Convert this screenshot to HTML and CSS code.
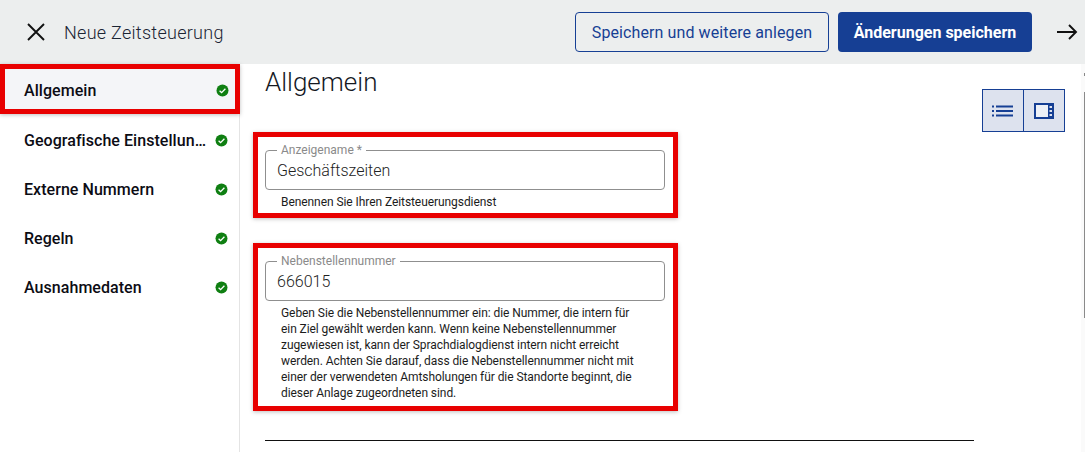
FILE: index.html
```html
<!DOCTYPE html>
<html lang="de">
<head>
    <meta charset="UTF-8">
    <title>Neue Zeitsteuerung</title>
    <link rel="stylesheet" href="styles.css">
</head>
<body>
    <header class="topbar">
        <svg class="icon-close" width="20" height="20" viewBox="0 0 20 20"><path d="M2 2 L18 18 M18 2 L2 18" fill="none" stroke="#111" stroke-width="1.9"/></svg>
        <span class="topbar-title">Neue Zeitsteuerung</span>
        <button class="btn btn-outline">Speichern und weitere anlegen</button>
        <button class="btn btn-primary">Änderungen speichern</button>
        <svg class="icon-next" width="22" height="16" viewBox="0 0 22 16"><path d="M1 8 H20 M13 1 L20 8 L13 15" fill="none" stroke="#111" stroke-width="1.9"/></svg>
    </header>
    <div class="layout">
        <nav class="sidebar">
            <a class="nav-item marked">
                <span class="nav-label">Allgemein</span>
                <svg class="check" width="13" height="13" viewBox="0 0 13 13"><circle cx="6.5" cy="6.5" r="6" fill="#0f7f12"/><path d="M3.6 6.7 L5.6 8.6 L9.4 4.8" fill="none" stroke="#fff" stroke-width="1.3"/></svg>
            </a>
            <a class="nav-item">
                <span class="nav-label">Geografische Einstellun…</span>
                <svg class="check" width="13" height="13" viewBox="0 0 13 13"><circle cx="6.5" cy="6.5" r="6" fill="#0f7f12"/><path d="M3.6 6.7 L5.6 8.6 L9.4 4.8" fill="none" stroke="#fff" stroke-width="1.3"/></svg>
            </a>
            <a class="nav-item">
                <span class="nav-label">Externe Nummern</span>
                <svg class="check" width="13" height="13" viewBox="0 0 13 13"><circle cx="6.5" cy="6.5" r="6" fill="#0f7f12"/><path d="M3.6 6.7 L5.6 8.6 L9.4 4.8" fill="none" stroke="#fff" stroke-width="1.3"/></svg>
            </a>
            <a class="nav-item">
                <span class="nav-label">Regeln</span>
                <svg class="check" width="13" height="13" viewBox="0 0 13 13"><circle cx="6.5" cy="6.5" r="6" fill="#0f7f12"/><path d="M3.6 6.7 L5.6 8.6 L9.4 4.8" fill="none" stroke="#fff" stroke-width="1.3"/></svg>
            </a>
            <a class="nav-item">
                <span class="nav-label">Ausnahmedaten</span>
                <svg class="check" width="13" height="13" viewBox="0 0 13 13"><circle cx="6.5" cy="6.5" r="6" fill="#0f7f12"/><path d="M3.6 6.7 L5.6 8.6 L9.4 4.8" fill="none" stroke="#fff" stroke-width="1.3"/></svg>
            </a>
        </nav>
        <main class="content">
            <div class="form-col">
                <h1>Allgemein</h1>
                <div class="field-box first">
                    <fieldset class="field">
                        <legend>Anzeigename *</legend>
                        <span class="field-value">Geschäftszeiten</span>
                    </fieldset>
                    <p class="hint">Benennen Sie Ihren Zeitsteuerungsdienst</p>
                </div>
                <div class="field-box">
                    <fieldset class="field">
                        <legend>Nebenstellennummer</legend>
                        <span class="field-value">666015</span>
                    </fieldset>
                    <p class="hint">Geben Sie die Nebenstellennummer ein: die Nummer, die intern für<br>ein Ziel gewählt werden kann. Wenn keine Nebenstellennummer<br>zugewiesen ist, kann der Sprachdialogdienst intern nicht erreicht<br>werden. Achten Sie darauf, dass die Nebenstellennummer nicht mit<br>einer der verwendeten Amtsholungen für die Standorte beginnt, die<br>dieser Anlage zugeordneten sind.</p>
                </div>
                <hr class="divider">
            </div>
            <div class="view-toggle">
                <button class="toggle-btn">
                    <svg width="22" height="14" viewBox="0 0 22 14"><path d="M0 2.5 H2 M0 7 H2 M0 11.5 H2 M4 2.5 H21 M4 7 H21 M4 11.5 H21" fill="none" stroke="#163f94" stroke-width="2"/></svg>
                </button>
                <button class="toggle-btn">
                    <svg width="20" height="16" viewBox="0 0 20 16"><rect x="1" y="1" width="18" height="14" fill="#eef1f7" stroke="#163f94" stroke-width="2"/><rect x="14" y="1" width="5" height="14" fill="#163f94"/><path d="M15.5 3 H18 V5 H15.5 Z M15.5 7 H18 V9 H15.5 Z M15.5 11 H18 V13 H15.5 Z" fill="#dde2ee"/></svg>
                </button>
            </div>
        </main>
        <div class="scrollbar">
            <div class="scroll-arrow"></div>
            <div class="scroll-thumb"></div>
        </div>
    </div>
</body>
</html>
```

FILE: styles.css
```css
* {
    margin: 0;
    padding: 0;
    box-sizing: border-box;
    font-family: Roboto, sans-serif;
}
html, body {
    height: 452px;
    overflow: hidden;
}
body {
    background: #fff;
    color: #111;
}

/* top bar */
.topbar {
    height: 64px;
    background: #eceeee;
    display: flex;
    align-items: center;
    padding: 0 7px 0 26px;
}
.icon-close {
    margin-right: 18px;
}
.topbar-title {
    font-size: 18px;
    font-weight: 300;
    letter-spacing: 0.28px;
    color: #1a2433;
    flex: 1;
}
.btn {
    height: 40px;
    border-radius: 4px;
    font-size: 16px;
}
.btn-outline {
    width: 254px;
    background: transparent;
    border: 1px solid #163f94;
    color: #163f94;
    letter-spacing: 0.1px;
    margin-right: 9px;
}
.btn-primary {
    width: 194px;
    background: #163f94;
    border: none;
    color: #fff;
    font-weight: 700;
    margin-right: 24px;
}

/* sidebar */
.layout {
    display: flex;
    height: 388px;
}
.sidebar {
    width: 240px;
    flex-shrink: 0;
    border-right: 1px solid #e4e4e4;
}
.nav-item {
    height: 49px;
    display: flex;
    align-items: center;
    padding: 0 11px 0 24px;
    font-size: 16px;
    font-weight: 500;
    letter-spacing: 0.05px;
    color: #0c0c14;
}
.nav-item.marked {
    height: 50px;
    margin: 0 -1px 2px 0;
    padding: 2px 6px 0 19px;
    background: #f4f5f8;
    border: 5px solid #e80000;
    box-shadow: 0 1px 4px rgba(0, 0, 0, 0.25);
}
.nav-label {
    flex: 1;
    min-width: 0;
    white-space: nowrap;
    margin-right: 8px;
}
.check {
    flex-shrink: 0;
}

/* form */
.content {
    flex: 1;
    display: flex;
    padding-left: 13px;
}
.form-col {
    width: 721px;
}
h1 {
    font-size: 26px;
    font-weight: 300;
    line-height: 36px;
    margin: 0 0 0 12px;
    color: #14181f;
}
.field-box {
    width: 425px;
    border: 5px solid #e80000;
    box-shadow: 0 1px 4px rgba(0, 0, 0, 0.25);
    padding: 6px 7px 2px 7px;
    margin-bottom: 25px;
}
.field-box.first {
    margin-top: 32px;
    padding-bottom: 0;
}
.field {
    height: 47px;
    width: 400px;
    border: 1px solid #8f8f8f;
    border-radius: 4px;
    padding: 0 11px;
}
.field legend {
    font-size: 12px;
    line-height: 14px;
    color: #8a8a8a;
    padding: 0 4px;
}
.field-value {
    display: block;
    font-size: 16px;
    line-height: 22px;
    padding-top: 3px;
    color: #222;
    font-weight: 300;
}
.hint {
    font-size: 12px;
    line-height: 16px;
    letter-spacing: -0.07px;
    padding: 4px 0 3px 16px;
    color: #1c1c1c;
}
.divider {
    margin: 29px 0 0 12px;
    width: 709px;
    border: none;
    border-top: 1px solid #111;
}

/* view toggle */
.view-toggle {
    display: flex;
    height: 43px;
    margin: 25px 0 0 8px;
    border: 1px solid #163f94;
    background: #dde2ee;
}
.toggle-btn {
    width: 40px;
    background: transparent;
    border: none;
    display: flex;
    align-items: center;
    justify-content: center;
}
.toggle-btn + .toggle-btn {
    border-left: 1px solid #163f94;
    width: 41px;
}

/* scrollbar at the right edge */
.scrollbar {
    position: absolute;
    right: 0;
    top: 64px;
    width: 4px;
    height: 388px;
    background: #fafafa;
}
.scroll-arrow {
    position: absolute;
    right: 0;
    top: 9px;
    width: 1px;
    height: 3px;
    background: #888;
}
.scroll-thumb {
    position: absolute;
    right: 0;
    top: 28px;
    width: 1px;
    height: 226px;
    background: #8a8a8a;
}
```
